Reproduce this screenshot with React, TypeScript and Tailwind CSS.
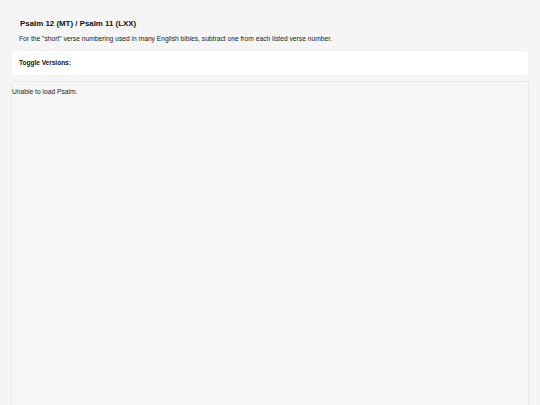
export default function App() {
  return (
    <div
      className="min-h-screen bg-[#f5f5f5] text-[#111] overflow-hidden"
      style={{ fontFamily: '"Liberation Sans", Arial, sans-serif' }}
    >
      <div className="h-[405px] flex flex-col px-[11px]">
        {/* Heading */}
        <div className="pt-[18.5px] pl-[9px]">
          <h1 className="text-[7.9px] font-bold leading-[10px]">
            Psalm 12 (MT) / Psalm 11 (LXX)
          </h1>
        </div>
        <p className="pl-[8px] mt-[5px] text-[6.7px] leading-[9px] text-[#222]">
          For the "short" verse numbering used in many English bibles, subtract one from each listed verse number.
        </p>

        {/* Toggle versions panel */}
        <div className="mt-[8.5px] mx-[1px] h-[24px] bg-white rounded-[2px] shadow-[0_0_1px_rgba(0,0,0,0.12)] flex items-center px-[7px]">
          <span className="text-[6.5px] font-bold leading-none">Toggle Versions:</span>
        </div>

        {/* Psalm body */}
        <div className="mt-[6px] flex-1 bg-[#f6f6f6] border border-[#e8e8e8] border-b-0 rounded-t-[2px]">
          <p className="pt-[4.5px] text-[6.7px] leading-[9px] text-[#222]">Unable to load Psalm.</p>
        </div>
      </div>
    </div>
  );
}
